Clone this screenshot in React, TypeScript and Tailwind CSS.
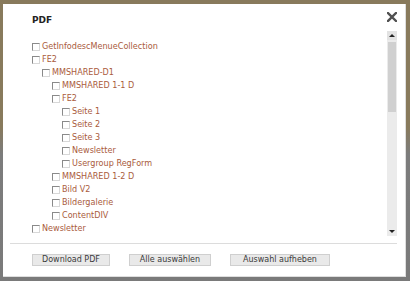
import React from "react";

const items: [number, string][] = [
  [0, "GetInfodescMenueCollection"],
  [0, "FE2"],
  [1, "MMSHARED-D1"],
  [2, "MMSHARED 1-1 D"],
  [2, "FE2"],
  [3, "Seite 1"],
  [3, "Seite 2"],
  [3, "Seite 3"],
  [3, "Newsletter"],
  [3, "Usergroup RegForm"],
  [2, "MMSHARED 1-2 D"],
  [2, "Bild V2"],
  [2, "Bildergalerie"],
  [2, "ContentDIV"],
  [0, "Newsletter"],
];

const indent = ["pl-0", "pl-[10px]", "pl-[20px]", "pl-[30px]"];

function Row({ level, label }: { level: number; label: string }) {
  return (
    <div className={`flex h-[13px] items-center ${indent[level]}`}>
      <span className="box-border h-[8px] w-[8px] shrink-0 border border-t-[#8a8a8a] border-l-[#8a8a8a] border-r-[#d8d8d8] border-b-[#d8d8d8] bg-white" />
      <span className="ml-[2px] text-[8.1px] leading-none text-[#a95b3c]">{label}</span>
    </div>
  );
}

function Btn({ w, children }: { w: string; children: React.ReactNode }) {
  return (
    <div
      className={`box-border flex h-[12px] items-center justify-center border border-[#cfcfcf] bg-[#e9e9e9] text-[8px] leading-none text-[#3a3a3a] ${w}`}
    >
      {children}
    </div>
  );
}

export default function App() {
  return (
    <div
      className="h-[281px] w-[410px] overflow-hidden bg-[linear-gradient(180deg,#887a5c_0%,#887a5c_45%,#7c7c7c_55%,#7a7a7a_100%)] pl-[3px] pt-[4px]"
      style={{ fontFamily: '"DejaVu Sans", Verdana, sans-serif' }}
    >
      <div className="box-border flex h-[273px] w-[403px] flex-col border-r border-b border-[#dedede] bg-white">
        {/* header */}
        <div className="flex h-[26px] shrink-0 items-start justify-between">
          <div className="pl-[29px] pt-[12px] text-[9px] font-bold leading-none text-[#222]">PDF</div>
          <svg className="mr-[8px] mt-[8px]" width="10" height="10" viewBox="0 0 10 10">
            <path d="M1 1 L9 9 M9 1 L1 9" stroke="#505050" strokeWidth="2.4" strokeLinecap="square" />
          </svg>
        </div>
        {/* body */}
        <div className="flex h-[209px] shrink-0">
          <div className="flex-1 overflow-hidden pl-[29px] pt-[10px]">
            {items.map(([l, t], i) => (
              <Row key={i} level={l} label={t} />
            ))}
          </div>
          <div className="mr-[8px] mt-[1px] flex h-[205px] w-[10px] flex-col bg-[#ebebeb]">
            <div className="flex h-[9px] items-center justify-center bg-[#e2e2e2]">
              <div className="h-0 w-0 border-x-[3px] border-b-[3px] border-x-transparent border-b-[#222]" />
            </div>
            <div className="ml-[1px] mt-[2px] h-[70px] w-[8px] bg-[#d0d0d0]" />
            <div className="flex-1" />
            <div className="flex h-[9px] items-center justify-center">
              <div className="h-0 w-0 border-x-[3px] border-t-[3px] border-x-transparent border-t-[#222]" />
            </div>
          </div>
        </div>
        {/* separator */}
        <div className="ml-[7px] mr-[8px] mt-[4px] h-px bg-[#dcdcdc]" />
        {/* buttons */}
        <div className="flex gap-[19px] pl-[29px] pt-[10px]">
          <Btn w="w-[78px]">Download PDF</Btn>
          <Btn w="w-[82px]">Alle auswählen</Btn>
          <Btn w="w-[100px]">Auswahl aufheben</Btn>
        </div>
      </div>
    </div>
  );
}
